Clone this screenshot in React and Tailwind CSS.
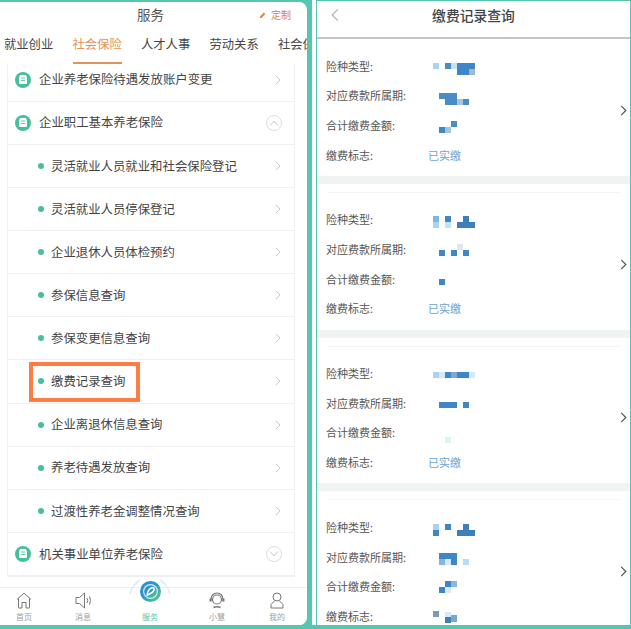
const font = "font-['Noto_Sans_CJK_SC','Noto_Sans',sans-serif]";

const tabs = ['就业创业', '社会保险', '人才人事', '劳动关系', '社会保险'];

const B = '#3f86c8';
const D = '#3f7fb8';
const L = '#a5d5f0';
const P = '#d5eaf8';

// mosaic blocks over the values: [x, y, w, h, colour]
const records = [
  {
    values: [
      [[5, 12, 6, 6, L], [17, 12, 6, 6, '#4a8cc8'], [23, 12, 6, 6, '#c5e3f5'], [29, 12, 18, 6, B], [29, 18, 12, 6, B], [41, 18, 6, 6, '#9db8cc']],
      [[11, 12, 18, 6, '#4a8cc8'], [17, 18, 12, 6, '#4a8cc8'], [29, 18, 6, 6, '#a9c4dc'], [35, 18, 6, 6, '#4a8cc8']],
      [[23, 11, 6, 6, '#4a8cc8'], [11, 17, 6, 6, B], [17, 17, 6, 6, '#a0c4e4']],
    ],
    paid: true,
  },
  {
    values: [
      [[5, 11, 6, 6, '#7db8e4'], [5, 17, 6, 6, L], [17, 11, 6, 6, B], [17, 17, 6, 6, '#c5e3f5'], [35, 11, 6, 6, D], [29, 17, 18, 6, D]],
      [[29, 10, 6, 6, '#dde6ee'], [11, 16, 6, 6, B], [23, 16, 6, 6, B], [35, 16, 6, 6, B]],
      [[11, 15, 6, 6, B]],
    ],
    paid: true,
  },
  {
    values: [
      [[5, 14, 6, 6, L], [11, 14, 6, 6, P], [17, 14, 6, 6, B], [23, 14, 6, 6, '#7da8d0'], [29, 14, 12, 6, B], [41, 14, 6, 6, P]],
      [[11, 14, 18, 6, B], [35, 14, 6, 6, B]],
      [[17, 19, 6, 6, '#d9f5f0']],
    ],
    paid: true,
  },
  {
    values: [
      [[5, 12, 6, 6, L], [5, 18, 6, 6, B], [17, 12, 6, 6, B], [35, 12, 6, 6, D], [29, 18, 18, 6, D]],
      [[11, 11, 18, 6, B], [11, 17, 6, 6, '#8ab4dc'], [17, 17, 6, 6, P], [23, 17, 6, 6, B], [35, 17, 6, 6, '#b5def5']],
      [[17, 10, 6, 6, B], [23, 10, 6, 6, '#8ab8e0'], [11, 16, 6, 6, B], [17, 16, 6, 6, P]],
    ],
    last: [[5, 10, 6, 6, '#7a9cb8'], [17, 11, 6, 5, P], [17, 16, 6, 6, D], [23, 14, 6, 7, '#7aa8cc']],
  },
];

function Chevron({ className, color = '#c8c8c8', dir = 'right', w = 6, h = 10, sw = 1.2 }) {
  const d = dir === 'right' ? 'M1 1l5 5-5 5' : 'M6 1L1 6l5 5';
  return (
    <svg width={w} height={h} viewBox="0 0 7 12" fill="none" className={className}>
      <path d={d} stroke={color} strokeWidth={sw} />
    </svg>
  );
}

function SectionIcon() {
  return (
    <span className="flex h-4 w-4 shrink-0 items-center justify-center rounded-full bg-[#47bf9c]">
      <svg width="10" height="9" viewBox="0 0 10 9" fill="white">
        <path d="M2 0h6l1 3v5a1 1 0 0 1-1 1H2a1 1 0 0 1-1-1V3z" />
        <path d="M3 3h4M3 5.500h4" stroke="#47bf9c" strokeWidth="0.8" />
      </svg>
    </span>
  );
}

function Toggle({ up }) {
  return (
    <span className="flex h-4 w-4 items-center justify-center rounded-full border border-[#dddddd]">
      <svg width="10" height="6" viewBox="0 0 10 6" fill="none">
        <path d={up ? 'M1 5.500L5 1l4 4.500' : 'M1 .5L5 5l4-4.500'} stroke="#c8c8c8" strokeWidth="1" />
      </svg>
    </span>
  );
}

function SectionRow({ label, toggle }) {
  return (
    <div className="flex h-[43.130px] items-center border-b border-[#f0f0f0] pl-[7px] pr-[12px]">
      <SectionIcon />
      <span className="ml-2 flex-1 text-[12.4px] text-[#444444]">{label}</span>
      {toggle === undefined ? <Chevron className="mr-[1px]" /> : <Toggle up={toggle} />}
    </div>
  );
}

function SubRow({ label, marked }) {
  return (
    <div className="relative flex h-[43.130px] items-center border-b border-[#f0f0f0] pl-[30px] pr-[13px]">
      <span className="h-[6px] w-[6px] rounded-full bg-[#47bf9c]" />
      <span className="ml-[7px] flex-1 text-[12.4px] text-[#444444]">{label}</span>
      <Chevron />
      {marked && <div className="absolute left-[21px] top-[2px] h-[40px] w-[111px] border-4 border-[#ff7d45]" />}
    </div>
  );
}

function NavItem({ label, width, active, children }) {
  return (
    <div className={`flex flex-col items-center ${width}`}>
      <div className="flex h-[24px] items-center">{children}</div>
      <span className={`text-[8px] leading-[10px] ${active ? 'text-[#55c7b0]' : 'text-[#a0a0a0]'}`}>{label}</span>
    </div>
  );
}

function ServicePanel() {
  return (
    <div className="flex h-[629px] w-[312px] shrink-0 bg-[#55c7b0] pb-1 pr-[5px] pt-[2px]">
      <div className="flex h-full w-[307px] flex-col overflow-hidden rounded-r-lg bg-white">
        <div className="relative flex h-[26px] shrink-0 items-center justify-center pb-[2px] pr-[6px]">
          <span className="text-[13.5px] text-[#555555]">服务</span>
          <div className="absolute left-[260px] top-[4px] flex items-center gap-[5px] text-[10px] leading-[18px] text-[#e0813f]">
            <svg width="6" height="6" viewBox="0 0 6 6" fill="#e0813f"><path d="M0 6V4.500L3.800.5l1.500 1.500L1.500 6z" /></svg>
            定制
          </div>
        </div>
        <div className="flex h-[36px] shrink-0 gap-[19px] overflow-hidden pl-1">
          {tabs.map((t, i) => (
            <div
              key={i}
              className={`h-[36px] w-[49.500px] shrink-0 whitespace-nowrap border-b-2 pt-[7px] text-[12.3px] leading-[18px] ${i === 1 ? 'border-[#e0935a] text-[#e0935a]' : 'border-transparent text-[#444444]'}`}
            >
              {t}
            </div>
          ))}
        </div>
        <div className="flex-1 overflow-hidden">
          <div className="-mt-[5.500px] ml-[7px] w-[288px] border-x border-b border-[#f0f0f0]">
            <SectionRow label="企业养老保险待遇发放账户变更" />
            <SectionRow label="企业职工基本养老保险" toggle={true} />
            <SubRow label="灵活就业人员就业和社会保险登记" />
            <SubRow label="灵活就业人员停保登记" />
            <SubRow label="企业退休人员体检预约" />
            <SubRow label="参保信息查询" />
            <SubRow label="参保变更信息查询" />
            <SubRow label="缴费记录查询" marked />
            <SubRow label="企业离退休信息查询" />
            <SubRow label="养老待遇发放查询" />
            <SubRow label="过渡性养老金调整情况查询" />
            <SectionRow label="机关事业单位养老保险" toggle={false} />
          </div>
        </div>
        <div className="relative flex h-[38px] shrink-0 border-t border-[#eeeeee] bg-white">
          <NavItem label="首页" width="w-[48px]">
            <svg width="16" height="17" viewBox="0 0 16 17" fill="none" stroke="#777777" strokeWidth="1">
              <path d="M1 7.500L8 1l7 6.500M2.500 6.500V15a1 1 0 0 0 1 1h2.500v-5.500h4V16h2.500a1 1 0 0 0 1-1V6.500" />
            </svg>
          </NavItem>
          <NavItem label="消息" width="w-[70px]">
            <svg width="17" height="17" viewBox="0 0 17 17" fill="none" stroke="#777777" strokeWidth="1">
              <path d="M1 5.500h3.500L9.500 1v15l-5-4.500H1z" />
              <path d="M12 6q1.500 2.500 0 5M14.500 4.500q2 4 0 8" />
            </svg>
          </NavItem>
          <NavItem label="服务" width="w-[64px]" active />
          <NavItem label="小慧" width="w-[70px]">
            <svg width="16" height="17" viewBox="0 0 16 17" fill="none" stroke="#777777" strokeWidth="1.200">
              <circle cx="8" cy="7.500" r="4.500" />
              <path d="M2 9V7a6 6 0 0 1 12 0v2" />
              <path d="M4.500 15.500q3.500-1.500 7 0" strokeWidth="1.500" />
              <path d="M1.500 6.500v3M14.500 6.500v3" strokeWidth="2" />
            </svg>
          </NavItem>
          <NavItem label="我的" width="w-[50px]">
            <svg width="14" height="17" viewBox="0 0 14 17" fill="none" stroke="#777777" strokeWidth="1">
              <circle cx="7" cy="5" r="4" />
              <path d="M4.500 9L1 12.500V16h12v-3.500L9.500 9" />
            </svg>
          </NavItem>
          {/* raised service button */}
          <svg width="46" height="34" viewBox="0 0 46 34" fill="none" className="absolute left-[127px] -top-[14px]">
            <defs>
              <linearGradient id="ring" x1="0" y1="0" x2="1" y2="1">
                <stop offset="0.450" stopColor="#2a93d2" />
                <stop offset="0.800" stopColor="#4cc08e" />
              </linearGradient>
            </defs>
            <path d="M3 20Q5 11 13 6" stroke="#dcecf4" strokeWidth="1.500" />
            <path d="M43 20Q41 11 33 6" stroke="#dcecf4" strokeWidth="1.500" />
            <circle cx="23.500" cy="17.500" r="10.500" fill="url(#ring)" />
            <circle cx="23.500" cy="17.500" r="7.500" fill="#d9f0f2" />
            <circle cx="23.500" cy="17.500" r="6.300" fill="url(#ring)" />
            <path d="M27 13.500q-4 0-5.500 3T20 21.500M27 13.500q.5 3.500-2 5t-5 3" stroke="white" strokeWidth="1.500" />
          </svg>
        </div>
      </div>
    </div>
  );
}

function Mosaic({ blocks }) {
  return (
    <svg width="48" height="30" viewBox="0 0 48 30" className="block">
      {blocks.map(([x, y, w, h, c], i) => (
        <rect key={i} x={x} y={y} width={w} height={h} fill={c} />
      ))}
    </svg>
  );
}

function RecordRow({ label, children }) {
  return (
    <div className="flex h-[29.700px] items-center">
      <span className="w-[102px] shrink-0 text-[11px] text-[#555555]">{label}</span>
      {children}
    </div>
  );
}

function RecordCard({ record, first }) {
  return (
    <>
      {!first && <div className="mx-[10px] mt-2 h-px bg-[#f3f6f6]" />}
      <div className="flex items-center pb-[6px] pl-[9px] pr-[3px] pt-3">
        <div className="flex-1">
          <RecordRow label="险种类型:"><Mosaic blocks={record.values[0]} /></RecordRow>
          <RecordRow label="对应费款所属期:"><Mosaic blocks={record.values[1]} /></RecordRow>
          <RecordRow label="合计缴费金额:"><Mosaic blocks={record.values[2]} /></RecordRow>
          <RecordRow label="缴费标志:">
            {record.paid ? <span className="text-[11px] text-[#6aa5d2]">已实缴</span> : <Mosaic blocks={record.last} />}
          </RecordRow>
        </div>
        <Chevron color="#555555" sw={1.300} w={7} h={11} />
      </div>
      <div className="h-2 bg-[#eff3f3]" />
    </>
  );
}

function RecordPanel() {
  return (
    <div className="h-[629px] w-[315px] shrink-0 overflow-hidden border-x border-b-4 border-t border-[#55c7b0] bg-white">
      <div className="relative flex h-[38px] items-center justify-center border-b-2 border-[#c4c4c4] pb-[7px]">
        <Chevron className="absolute left-[14px] top-[7px]" color="#b0b0b0" dir="left" w={8} h={14} sw={1} />
        <span className="text-[13.800px] font-medium text-[#444444]">缴费记录查询</span>
      </div>
      {records.map((r, i) => (
        <RecordCard key={i} record={r} first={i === 0} />
      ))}
    </div>
  );
}

export default function App() {
  return (
    <div className={`flex h-[629px] w-[631px] overflow-hidden bg-white ${font}`}>
      <ServicePanel />
      <div className="h-full w-1 border-b-4 border-[#55c7b0]" />
      <RecordPanel />
    </div>
  );
}
